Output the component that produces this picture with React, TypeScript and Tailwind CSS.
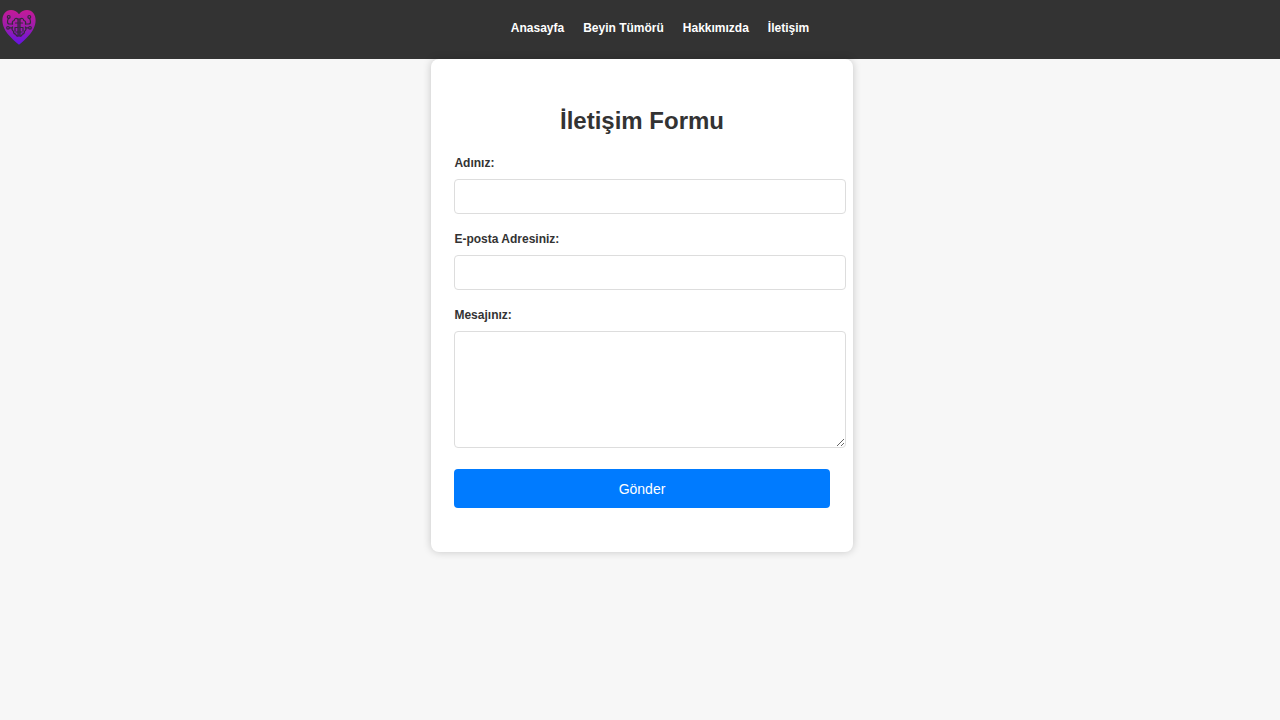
const links = ["Anasayfa", "Beyin Tümörü", "Hakkımızda", "İletişim"];

function Logo() {
  return (
    <svg viewBox="0 0 34 36" className="h-9 w-[34px]" aria-hidden="true">
      <defs>
        <linearGradient id="heart" x1="0" y1="0" x2="0" y2="1">
          <stop offset="0" stopColor="#c41a98" />
          <stop offset="0.5" stopColor="#9c1cac" />
          <stop offset="1" stopColor="#6412e6" />
        </linearGradient>
      </defs>
      <path
        d="M17 4.2C14.8 1.2 12 0 9 0 3.6 0 .4 4.4.4 10.200c0 6 3 11 6.800 15.400 3 3.500 6.600 6.600 9.800 9.200 3.200-2.600 6.800-5.700 9.800-9.200 3.800-4.400 6.800-9.400 6.800-15.400C33.600 4.400 30.400 0 25 0c-3 0-5.800 1.200-8 4.200Z"
        fill="url(#heart)"
      />
      <g fill="none" stroke="#352a3d" strokeWidth="1.200" strokeLinejoin="round" strokeLinecap="round">
        <path d="M16.100 9v17M17.900 9v17" strokeWidth="1.400" />
        <path d="M16 9c-2-1.200-3.500-.5-3.800 1.500-1.700.3-2.200 1.800-1.700 3.500M10.500 17c-1 1.700-.5 3.500 1 4.200 0 1.700.8 2.800 2.200 3 .5 1.500 1.500 2 2.300 1.800" />
        <path d="M18 9c2-1.200 3.500-.5 3.800 1.500 1.700.3 2.200 1.800 1.700 3.500M23.500 17c1 1.700.5 3.500-1 4.200 0 1.700-.8 2.800-2.200 3-.5 1.500-1.500 2-2.300 1.800" />
        <path d="M16 13h-2.500M16 17.500h-3M13 17.500v3.500M16 22h-2M18 13h2.500M18 17.500h3M21 17.500v3.500M18 22h2" />
        <path d="M10.500 14H7.500Q5.500 14 5.500 12 5.500 10 6.500 8.500M23.500 14h3Q28.500 14 28.500 12 28.500 10 27.500 8.500M10.500 17.800H7.500M23.500 17.800h3" />
        <circle cx="6.700" cy="6.900" r="1.400" />
        <circle cx="27.300" cy="6.900" r="1.400" />
        <circle cx="6" cy="17.800" r="1.300" />
        <circle cx="28" cy="17.800" r="1.300" />
      </g>
    </svg>
  );
}

const labelStyle = "mb-2 block text-xs leading-4 font-bold";
const fieldStyle = "block w-[calc(100%+16px)] rounded border border-[#ddd] bg-white px-2 text-sm outline-none";

export default function App() {
  return (
    <div className="min-h-screen bg-[#f7f7f7] font-['Liberation_Sans',Arial,sans-serif] text-[#333]">
      <header className="flex items-start bg-[#333] px-0.5 pt-[10px] pb-[13px]">
        <a href="#" aria-label="Anasayfa" className="block">
          <Logo />
        </a>
        <nav className="flex flex-1 justify-center gap-[19px] pt-[10px] pl-[6px]">
          {links.map((link) => (
            <a key={link} href="#" className="text-xs leading-4 font-bold text-white">
              {link}
            </a>
          ))}
        </nav>
      </header>
      <main className="pl-1">
        <form
          className="mx-auto w-[33%] min-w-80 rounded-lg bg-white px-[23px] pt-11 pb-11 shadow-[0_0_9px_rgba(0,0,0,0.2)]"
          onSubmit={(event) => event.preventDefault()}
        >
          <h1 className="mb-4 text-center text-2xl leading-9 font-bold">İletişim Formu</h1>
          <div className="mb-[17px]">
            <label htmlFor="name" className={labelStyle}>Adınız:</label>
            <input id="name" type="text" className={`${fieldStyle} h-[35px]`} />
          </div>
          <div className="mb-[17px]">
            <label htmlFor="email" className={labelStyle}>E-posta Adresiniz:</label>
            <input id="email" type="email" className={`${fieldStyle} h-[35px]`} />
          </div>
          <div className="mb-[21px]">
            <label htmlFor="message" className={labelStyle}>Mesajınız:</label>
            <textarea id="message" className={`${fieldStyle} h-[117px] resize py-2`} />
          </div>
          <button type="submit" className="block h-[39px] w-full rounded bg-[#007bff] text-sm text-white">
            Gönder
          </button>
        </form>
      </main>
    </div>
  );
}
